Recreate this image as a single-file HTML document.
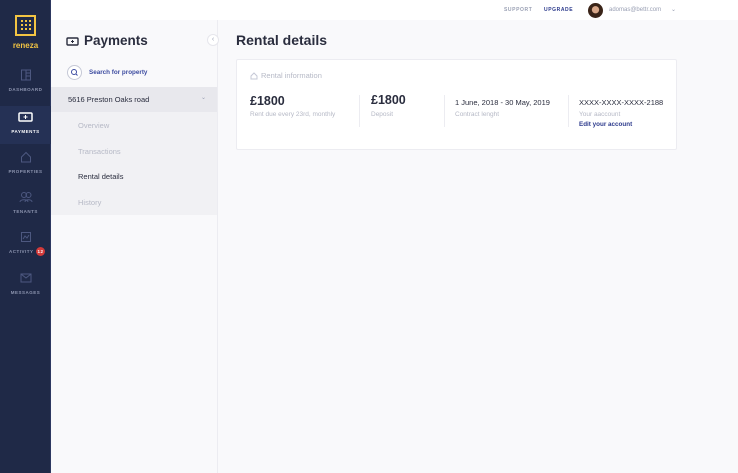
<!DOCTYPE html>
<html><head><meta charset="utf-8"><style>
*{margin:0;padding:0;box-sizing:border-box}
body{width:738px;height:473px;overflow:hidden;font-family:"Liberation Sans",sans-serif;background:#f9f9fb;position:relative;color:#2a2d3e}
.sb{position:absolute;left:0;top:0;width:51px;height:473px;background:#1f2947;border-right:1px solid #2d3860}
.logo{position:absolute;left:15px;top:15px;width:21px;height:21px;border:2px solid #f2c443}
.logo i{position:absolute;width:2px;height:2px;background:#f2c443}
.brand{position:absolute;top:41px;width:51px;text-align:center;color:#f2c443;font-size:8px;font-weight:bold}
.nav{position:absolute;left:0;width:51px;height:40px;text-align:center;font-size:4.5px;letter-spacing:.5px;color:#8d95b0;font-weight:bold}
.nav.act{background:#253155;color:#fff}
.nav svg{display:block;margin:0 auto 6px}
.top{position:absolute;left:51px;top:0;right:0;height:20px;background:#fff}
.top span{position:absolute;top:7px;font-size:5px;letter-spacing:.6px;font-weight:bold}
.panel{position:absolute;left:51px;top:20px;width:167px;height:453px;background:#f9f9fb;border-right:1px solid #ececf1}
.h1{position:absolute;left:84px;top:33px;font-size:13.5px;font-weight:bold;color:#2a2d3e}
.h2{position:absolute;left:236px;top:32px;font-size:14px;font-weight:bold;color:#2a2d3e}
.card{position:absolute;left:236px;top:59px;width:441px;height:91px;background:#fff;border:1px solid #ececf1;border-radius:2px}
.sm{font-size:6.5px;color:#b6b9c6;position:absolute}
.big{font-size:12.5px;font-weight:bold;position:absolute}
.md{font-size:7.5px;position:absolute}
.vl{position:absolute;top:35px;width:1px;height:32px;background:#ececf1}
</style></head><body>
<div class="sb">
 <div class="logo">
  <i style="left:4px;top:3px"></i><i style="left:8px;top:3px"></i><i style="left:12px;top:3px"></i>
  <i style="left:4px;top:7px"></i><i style="left:8px;top:7px"></i><i style="left:12px;top:7px"></i>
  <i style="left:4px;top:11px"></i><i style="left:8px;top:11px"></i><i style="left:12px;top:11px"></i>
 </div>
 <div class="brand">reneza</div>
 <div class="nav" style="top:69px"><svg width="12" height="12" viewBox="0 0 12 12"><rect x="1.5" y="1" width="9" height="10" fill="none" stroke="#4d5880"/><path d="M6 1v10M6 4h4M6 7h4" stroke="#4d5880"/></svg>DASHBOARD</div>
 <div class="nav act" style="top:106px;padding-top:5px;height:38px"><svg width="16" height="12" viewBox="0 0 16 12"><rect x="1" y="2" width="13" height="8" rx="1" fill="none" stroke="#fff" stroke-width="1.5"/><path d="M7.5 4v4M5.5 6h4" stroke="#fff"/></svg>PAYMENTS</div>
 <div class="nav" style="top:151px"><svg width="12" height="12" viewBox="0 0 12 12"><path d="M1.5 6L6 1.5 10.5 6V11h-9z" fill="none" stroke="#4d5880"/></svg>PROPERTIES</div>
 <div class="nav" style="top:191px"><svg width="14" height="12" viewBox="0 0 14 12"><circle cx="5" cy="4" r="2.5" fill="none" stroke="#4d5880"/><circle cx="9.5" cy="4" r="2.5" fill="none" stroke="#4d5880"/><path d="M1 11c0-3 8-3 8 0M6 11c0-3 7-3 7 0" fill="none" stroke="#4d5880"/></svg>TENANTS</div>
 <div class="nav" style="top:231px;text-align:left;padding-left:9px"><svg width="12" height="12" viewBox="0 0 12 12" style="margin-left:11px"><rect x="1.5" y="1.5" width="9" height="9" fill="none" stroke="#4d5880"/><path d="M3 8l2-3 2 2 2-3" fill="none" stroke="#4d5880"/></svg>ACTIVITY<span style="position:absolute;left:36px;top:16px;width:9px;height:9px;border-radius:50%;background:#d23a3a;color:#fff;font-size:4.5px;line-height:9px;text-align:center">12</span></div>
 <div class="nav" style="top:272px"><svg width="12" height="12" viewBox="0 0 12 12"><rect x="1" y="2" width="10" height="8" fill="none" stroke="#4d5880"/><path d="M1 2l5 4 5-4" fill="none" stroke="#4d5880"/></svg>MESSAGES</div>
</div>
<div class="top">
 <span style="left:453px;color:#9aa0b4">SUPPORT</span>
 <span style="left:493px;color:#2c3a8c">UPGRADE</span>
 <div style="position:absolute;left:537px;top:3px;width:15px;height:15px;border-radius:50%;background:radial-gradient(circle at 50% 45%,#d9a88a 0 30%,#3a2418 35%)"></div>
 <span style="left:558px;top:7px;font-weight:normal;letter-spacing:0;color:#9aa0b4;font-size:6px">adomas@bettr.com</span>
 <span style="left:620px;top:6px;font-weight:normal;color:#9aa0b4;font-size:6px">&#8964;</span>
</div>
<div class="panel">
 <div style="position:absolute;left:156px;top:14px;width:12px;height:12px;border-radius:50%;background:#fff;border:1px solid #e6e6ec;font-size:7px;color:#9aa0b4;text-align:center;line-height:10px">&lsaquo;</div>
 <div style="position:absolute;left:16px;top:45px;width:15px;height:15px;border-radius:50%;border:1px solid #c5c8d6;background:#fff"><svg width="13" height="13" viewBox="0 0 13 13"><circle cx="6" cy="6" r="2.5" fill="none" stroke="#3c4ba0"/><path d="M8 8l1.5 1.5" stroke="#3c4ba0"/></svg></div>
 <div style="position:absolute;left:38px;top:49px;font-size:6.3px;color:#3c4ba0;font-weight:bold">Search for property</div>
 <div style="position:absolute;left:0;top:67px;width:166px;height:128px;background:#f1f1f4"></div>
 <div style="position:absolute;left:0;top:67px;width:166px;height:25px;background:#e8e8ed"></div>
 <div style="position:absolute;left:17px;top:75px;font-size:7.5px;color:#2a2d3e">5616 Preston Oaks road</div>
 <div style="position:absolute;left:150px;top:74px;font-size:6px;color:#9aa0b4">&#8964;</div>
 <div style="position:absolute;left:27px;top:101px;font-size:7.5px;color:#b6b9c6">Overview</div>
 <div style="position:absolute;left:27px;top:127px;font-size:7.5px;color:#b6b9c6">Transactions</div>
 <div style="position:absolute;left:27px;top:152px;font-size:7.5px;color:#2a2d3e">Rental details</div>
 <div style="position:absolute;left:27px;top:178px;font-size:7.5px;color:#b6b9c6">History</div>
</div>
<svg style="position:absolute;left:66px;top:37px" width="13" height="10" viewBox="0 0 13 10"><rect x="1" y="1" width="11" height="7" rx="1" fill="none" stroke="#2a2d3e" stroke-width="1.4"/><path d="M6.5 3v3M5 4.5h3" stroke="#2a2d3e"/></svg>
<div class="h1">Payments</div>
<div class="h2">Rental details</div>
<div class="card">
 <svg style="position:absolute;left:13px;top:12px" width="8" height="8" viewBox="0 0 8 8"><path d="M1 4L4 1 7 4V7H1z" fill="none" stroke="#c5c8d6"/></svg>
 <div class="sm" style="left:24px;top:11px;font-size:7.5px">Rental information</div>
 <div class="big" style="left:13px;top:34px">£1800</div>
 <div class="sm" style="left:13px;top:51px">Rent due every 23rd, monthly</div>
 <div class="vl" style="left:122px"></div>
 <div class="big" style="left:134px;top:33px">£1800</div>
 <div class="sm" style="left:134px;top:51px">Deposit</div>
 <div class="vl" style="left:207px"></div>
 <div class="md" style="left:218px;top:38px">1 June, 2018 - 30 May, 2019</div>
 <div class="sm" style="left:218px;top:51px">Contract lenght</div>
 <div class="vl" style="left:331px"></div>
 <div class="md" style="left:342px;top:38px">XXXX-XXXX-XXXX-2188</div>
 <div class="sm" style="left:342px;top:51px">Your aaccount</div>
 <div style="position:absolute;left:342px;top:61px;font-size:6.3px;color:#2c3a8c;font-weight:bold">Edit your account</div>
</div>
</body></html>
